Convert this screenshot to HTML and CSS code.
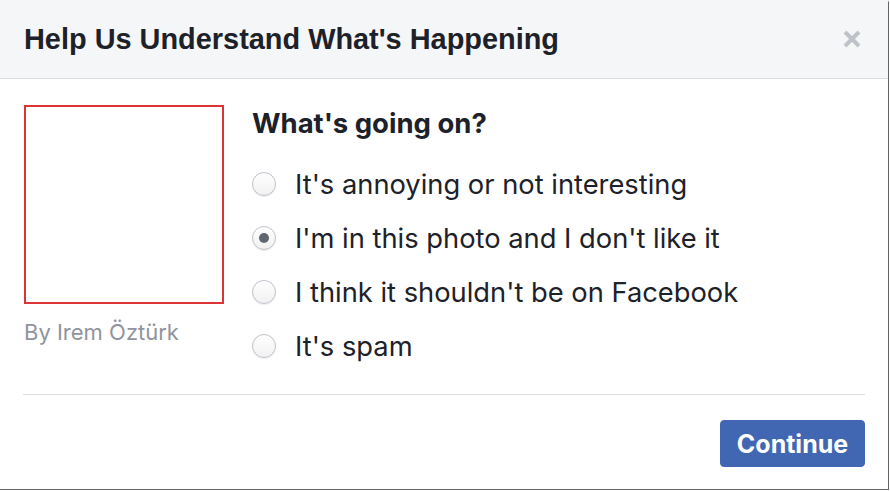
FILE: index.html
```html
<!DOCTYPE html>
<html>

<head>
  <title>Help Us Understand What's Happening</title>
  <link rel="stylesheet" href="styles.css">
</head>

<body>
  <div class="dialog">
    <header class="dialog-header">
      <h1>Help Us Understand What's Happening</h1>
      <svg class="close" width="18" height="18" viewBox="0 0 18 18">
        <path d="M2 2 L16 16 M16 2 L2 16" stroke="#bec2c9" stroke-width="4" />
      </svg>
    </header>

    <div class="dialog-body">
      <div class="thumb-col">
        <div class="thumb"></div>
        <p class="byline">By Irem Öztürk</p>
      </div>

      <div class="question">
        <h2>What's going on?</h2>
        <ul class="options">
          <li><span class="radio"></span> It's annoying or not interesting</li>
          <li><span class="radio checked"></span> I'm in this photo and I don't like it</li>
          <li><span class="radio"></span> I think it shouldn't be on Facebook</li>
          <li><span class="radio"></span> It's spam</li>
        </ul>
      </div>
    </div>

    <div class="dialog-footer">
      <button type="button">Continue</button>
    </div>
  </div>
</body>

</html>
```

FILE: styles.css
```css
body {
  margin: 0;
  background: #fff;
  font-family: Inter, "Liberation Sans", Arial, sans-serif;
  color: #1d2129;
}

.dialog {
  width: 888px;
  height: 489px;
  border-right: 1px solid #666;
  border-bottom: 1px solid #666;
  border-top-right-radius: 3px;
}

.dialog-header {
  height: 78px;
  background-color: #f5f6f7;
  border-bottom: 1px solid #dddfe2;
  display: flex;
  align-items: center;
  justify-content: space-between;
  padding: 0 27px 0 24px;
}

.dialog-header h1 {
  margin: 0;
  font-family: "Liberation Sans", Arial, sans-serif;
  font-size: 28.9px;
  font-weight: bold;
}

.close {
  display: block;
}

.dialog-body {
  display: flex;
  padding: 26px 24px 0 24px;
  height: 289px;
}

.thumb-col {
  width: 200px;
}

.thumb {
  width: 196px;
  height: 195px;
  border: 2px solid #dd3333;
}

.byline {
  margin: 16px 0 0 0;
  font-size: 22px;
  line-height: 24px;
  color: #90949c;
}

.question {
  margin-left: 28px;
}

.question h2 {
  margin: 4px 0 0 0;
  font-size: 27.5px;
  line-height: 28px;
  font-weight: bold;
}

.options {
  list-style: none;
  margin: 20px 0 0 0;
  padding: 0;
}

.options li {
  display: flex;
  align-items: center;
  gap: 19px;
  height: 54px;
  font-size: 27.3px;
}

.radio {
  flex: none;
  width: 22px;
  height: 22px;
  border-radius: 50%;
  border: 1px solid #bec2c9;
  background: linear-gradient(#fff, #f1f1f1);
  box-shadow: 0 1px 1px rgba(0, 0, 0, 0.08);
  display: flex;
  align-items: center;
  justify-content: center;
}

.radio.checked::after {
  content: "";
  width: 10px;
  height: 10px;
  border-radius: 50%;
  background-color: #606770;
}

.dialog-footer {
  margin: 0 23px 0 23px;
  border-top: 1px solid #dadde1;
  display: flex;
  justify-content: flex-end;
  padding-top: 25px;
}

.dialog-footer button {
  width: 145px;
  height: 47px;
  background-color: #4267b2;
  border: 1px solid #4267b2;
  border-radius: 4px;
  color: #fff;
  font-family: Inter, "Liberation Sans", Arial, sans-serif;
  font-size: 25px;
  font-weight: bold;
}
```
